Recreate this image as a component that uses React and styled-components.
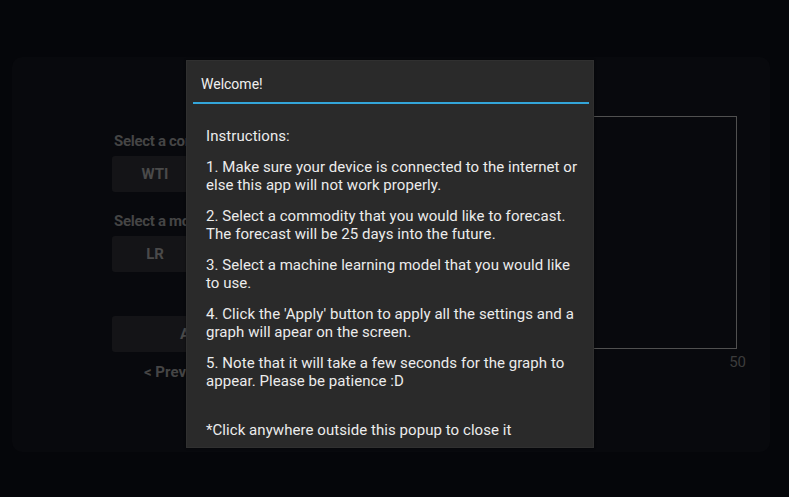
import React from "react";
import styled, { createGlobalStyle } from "styled-components";

const Global = createGlobalStyle`
  html, body { margin: 0; padding: 0; background: #05060a; }
  body { font-family: Roboto, "Noto Sans", sans-serif; width: 789px; height: 497px; overflow: hidden; }
  * { box-sizing: border-box; }
`;

const Page = styled.div`
  position: relative;
  width: 789px;
  height: 497px;
  padding: 57px 19px 45px 12px;
  background: #05060a;
`;

const Card = styled.div`
  width: 758px;
  height: 395px;
  border-radius: 10px;
  background: #08090d;
  display: flex;
  padding: 59px 33px 0 100px;
  gap: 14px;
`;

const Column = styled.div`
  width: 174px;
  display: flex;
  flex-direction: column;
`;

const Label = styled.div`
  height: 20px;
  line-height: 20px;
  padding-left: 2px;
  margin-top: ${(p) => p.$top}px;
  font-size: 15px;
  font-weight: 700;
  letter-spacing: -0.3px;
  color: #454545;
  white-space: nowrap;
`;

const ButtonRow = styled.div`
  display: flex;
  gap: 2px;
  margin-top: ${(p) => p.$top || 0}px;
`;

const Btn = styled.div`
  flex: 1;
  height: 36px;
  border-radius: 3px;
  background: #141417;
  color: #4a4a4a;
  font-size: 15px;
  font-weight: 700;
  display: flex;
  align-items: center;
  justify-content: center;
`;

const NavRow = styled.div`
  display: flex;
  margin-top: 10px;
  height: 20px;
  align-items: center;
`;

const NavLink = styled.div`
  flex: 1;
  padding-left: 32px;
  font-size: 15px;
  font-weight: 700;
  color: #454545;
  white-space: nowrap;
`;

const ChartArea = styled.div`
  flex: 1;
  display: flex;
  flex-direction: column;
  align-items: stretch;
`;

const ChartBox = styled.div`
  height: 233px;
  border: 1px solid #505050;
`;

const Ticks = styled.div`
  display: flex;
  justify-content: flex-end;
  margin-right: -9px;
  margin-top: 4px;
  font-size: 15px;
  color: #3c3c3c;
`;

const Popup = styled.div`
  position: absolute;
  left: 186px;
  top: 60px;
  width: 408px;
  height: 388px;
  background: #2a2a2a;
  border: 1px solid #303030;
  box-shadow: 0 0 2px rgba(0, 0, 0, 0.6);
  display: flex;
  flex-direction: column;
`;

const Title = styled.div`
  height: 41px;
  padding: 15px 0 0 14px;
  font-size: 14px;
  line-height: 16px;
  color: #f0f0f0;
`;

const Divider = styled.div`
  height: 2px;
  margin: 0 4px 0 6px;
  background: #33a5d9;
`;

const Content = styled.div`
  margin-left: 19px;
  padding-top: 23px;
  width: 375px;
  display: flex;
  flex-direction: column;
  gap: 13px;
`;

const Para = styled.p`
  margin: 0;
  margin-top: ${(p) => p.$extra || 0}px;
  font-size: 15px;
  line-height: 18px;
  letter-spacing: 0.06px;
  color: #ececec;
`;

const items = [
  "1. Make sure your device is connected to the internet or else this app will not work properly.",
  "2. Select a commodity that you would like to forecast. The forecast will be 25 days into the future.",
  "3. Select a machine learning model that you would like to use.",
  "4. Click the 'Apply' button to apply all the settings and a graph will apear on the screen.",
  "5. Note that it will take a few seconds for the graph to appear. Please be patience :D",
];

export default function App() {
  return (
    <>
      <Global />
      <Page>
        <Card>
          <Column>
            <Label $top={15}>Select a commodity</Label>
            <ButtonRow $top={5}>
              <Btn>WTI</Btn>
              <Btn>Brent</Btn>
            </ButtonRow>
            <Label $top={19}>Select a model</Label>
            <ButtonRow $top={5}>
              <Btn>LR</Btn>
              <Btn>SVR</Btn>
            </ButtonRow>
            <ButtonRow $top={44}>
              <Btn>Apply</Btn>
            </ButtonRow>
            <NavRow>
              <NavLink>&lt; Prev</NavLink>
              <NavLink>Next &gt;</NavLink>
            </NavRow>
          </Column>
          <ChartArea>
            <ChartBox />
            <Ticks>
              <span>50</span>
            </Ticks>
          </ChartArea>
        </Card>
        <Popup>
          <Title>Welcome!</Title>
          <Divider />
          <Content>
            <Para>Instructions:</Para>
            {items.map((t) => (
              <Para key={t}>{t}</Para>
            ))}
            <Para $extra={18}>*Click anywhere outside this popup to close it</Para>
          </Content>
        </Popup>
      </Page>
    </>
  );
}
